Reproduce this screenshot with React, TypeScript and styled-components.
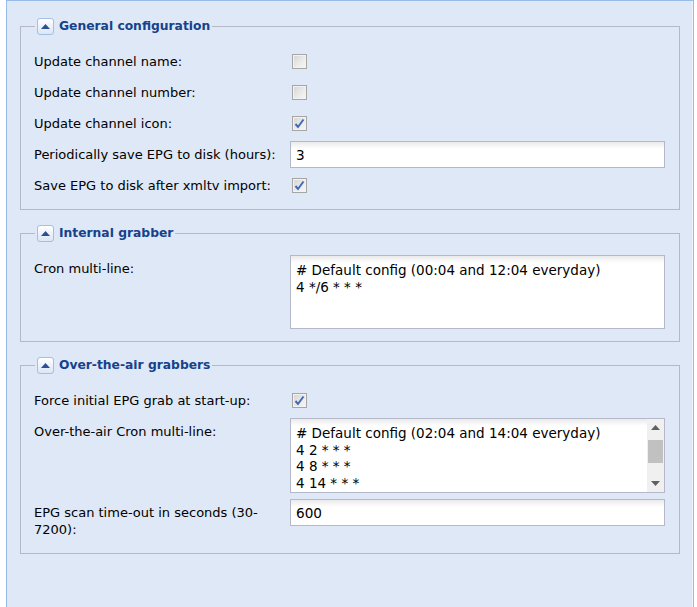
import styled, { createGlobalStyle } from "styled-components";

const GlobalStyle = createGlobalStyle`
  html, body {
    margin: 0;
    padding: 0;
    background: #ffffff;
    overflow: hidden;
  }
  * {
    box-sizing: border-box;
  }
`;

const Panel = styled.div`
  margin-left: 6px;
  width: 688px;
  min-height: calc(100vh + 4px);
  padding: 16px 13px 0 13px;
  background-color: #dfe8f6;
  border: 1px solid #99bbe8;
  border-bottom: none;
  box-shadow: inset -1px 0 0 #eef3fb;
  font-family: "DejaVu Sans", "Noto Sans", sans-serif;
`;

const FieldSet = styled.fieldset`
  margin: 0 0 14px 0;
  padding: 13px 13px 6px 13px;
  border: 1px solid #b5b8c8;
  min-width: 0;
`;

const Legend = styled.legend`
  display: flex;
  align-items: center;
  gap: 5px;
  height: 18px;
  margin-left: 1px;
  padding: 0 2px;
  font-family: "DejaVu Sans", sans-serif;
  font-size: 12.3px;
  font-weight: bold;
  color: #15428b;
`;

const CollapseButton = styled.span`
  display: flex;
  align-items: center;
  justify-content: center;
  width: 17px;
  height: 17px;
  border: 1px solid #a3bfe6;
  border-radius: 3px;
  background: linear-gradient(to bottom, #ffffff 0%, #e9f0fa 60%, #dbe6f6 100%);
`;

const Row = styled.div`
  display: grid;
  grid-template-columns: 256px 375px;
  align-items: start;
  margin-bottom: 4px;
`;

const Label = styled.label`
  padding: 5px 0;
  font-size: 13px;
  line-height: 17px;
  color: #000000;
`;

const CheckCell = styled.div`
  height: 27px;
  display: flex;
  align-items: center;
  padding-left: 2px;
`;

const CheckBox = styled.span`
  display: flex;
  align-items: center;
  justify-content: center;
  width: 15px;
  height: 15px;
  border: 1px solid #a6a6a6;
  background: linear-gradient(135deg, #d4d4d4 0%, #ececec 60%, #f6f6f6 100%);
  box-shadow: inset 0 0 0 1px #f2f2f2;
`;

const TextInput = styled.input`
  width: 375px;
  height: 27px;
  padding: 0 5px;
  border: 1px solid #b5b8c8;
  background: linear-gradient(to bottom, #eaeaea 0px, #ffffff 7px);
  font-family: "DejaVu Sans", sans-serif;
  font-size: 13.6px;
  color: #000000;
  outline: none;
`;

const TextArea = styled.textarea`
  display: block;
  width: 375px;
  height: 74px;
  margin: 0 0 2px 0;
  padding: 6px 5px;
  border: 1px solid #b5b8c8;
  background: linear-gradient(to bottom, #eaeaea 0px, #ffffff 7px);
  font-family: "DejaVu Sans", sans-serif;
  font-size: 13.5px;
  line-height: 16.5px;
  color: #000000;
  resize: none;
  overflow: hidden;
  outline: none;
`;

const ScrollBox = styled.div`
  display: flex;
  width: 375px;
  height: 75px;
  margin-bottom: 2px;
  border: 1px solid #b5b8c8;
  background: #ffffff;
`;

const ScrollText = styled(TextArea)`
  flex: 1;
  width: auto;
  height: 100%;
  margin: 0;
  border: none;
  padding-top: 6px;
`;

const ScrollBar = styled.div`
  width: 17px;
  display: flex;
  flex-direction: column;
  align-items: center;
  background: #f0f0f0;
`;

const ScrollArrow = styled.div`
  height: 17px;
  width: 17px;
  display: flex;
  align-items: center;
  justify-content: center;
`;

const ScrollTrack = styled.div`
  flex: 1;
  width: 17px;
  padding: 4px 1px 0 1px;
`;

const ScrollThumb = styled.div`
  height: 23px;
  background: #c1c1c1;
`;

const Arrow = ({ up }: { up?: boolean }) => (
  <svg width="9" height="5" viewBox="0 0 9 5">
    <path d={up ? "M0 5 L4.5 0 L9 5 Z" : "M0 0 L4.5 5 L9 0 Z"} fill="#606060" />
  </svg>
);

const Check = ({ checked }: { checked?: boolean }) => (
  <CheckCell>
    <CheckBox>
      {checked && (
        <svg width="11" height="11" viewBox="0 0 11 11">
          <path d="M1.5 6 L4 9 L9.5 1.5" fill="none" stroke="#4469b4" strokeWidth="2" />
        </svg>
      )}
    </CheckBox>
  </CheckCell>
);

const Section: React.FC<{ title: string; children: React.ReactNode }> = ({ title, children }) => (
  <FieldSet>
    <Legend>
      <CollapseButton>
        <svg width="9" height="5" viewBox="0 0 9 5">
          <path d="M0 5 L4.5 0 L9 5 Z" fill="#2d5094" />
        </svg>
      </CollapseButton>
      {title}
    </Legend>
    {children}
  </FieldSet>
);

const App: React.FC = () => {
  return (
    <>
      <GlobalStyle />
      <Panel>
        <Section title="General configuration">
          <Row>
            <Label>Update channel name:</Label>
            <Check />
          </Row>
          <Row>
            <Label>Update channel number:</Label>
            <Check />
          </Row>
          <Row>
            <Label>Update channel icon:</Label>
            <Check checked />
          </Row>
          <Row>
            <Label>Periodically save EPG to disk (hours):</Label>
            <TextInput defaultValue="3" />
          </Row>
          <Row>
            <Label>Save EPG to disk after xmltv import:</Label>
            <Check checked />
          </Row>
        </Section>

        <Section title="Internal grabber">
          <Row>
            <Label>Cron multi-line:</Label>
            <TextArea defaultValue={"# Default config (00:04 and 12:04 everyday)\n4 */6 * * *"} />
          </Row>
        </Section>

        <Section title="Over-the-air grabbers">
          <Row>
            <Label>Force initial EPG grab at start-up:</Label>
            <Check checked />
          </Row>
          <Row>
            <Label>Over-the-air Cron multi-line:</Label>
            <ScrollBox>
              <ScrollText defaultValue={"# Default config (02:04 and 14:04 everyday)\n4 2 * * *\n4 8 * * *\n4 14 * * *\n"} />
              <ScrollBar>
                <ScrollArrow><Arrow up /></ScrollArrow>
                <ScrollTrack><ScrollThumb /></ScrollTrack>
                <ScrollArrow><Arrow /></ScrollArrow>
              </ScrollBar>
            </ScrollBox>
          </Row>
          <Row>
            <Label>EPG scan time-out in seconds (30-7200):</Label>
            <TextInput defaultValue="600" />
          </Row>
        </Section>
      </Panel>
    </>
  );
};

export default App;
